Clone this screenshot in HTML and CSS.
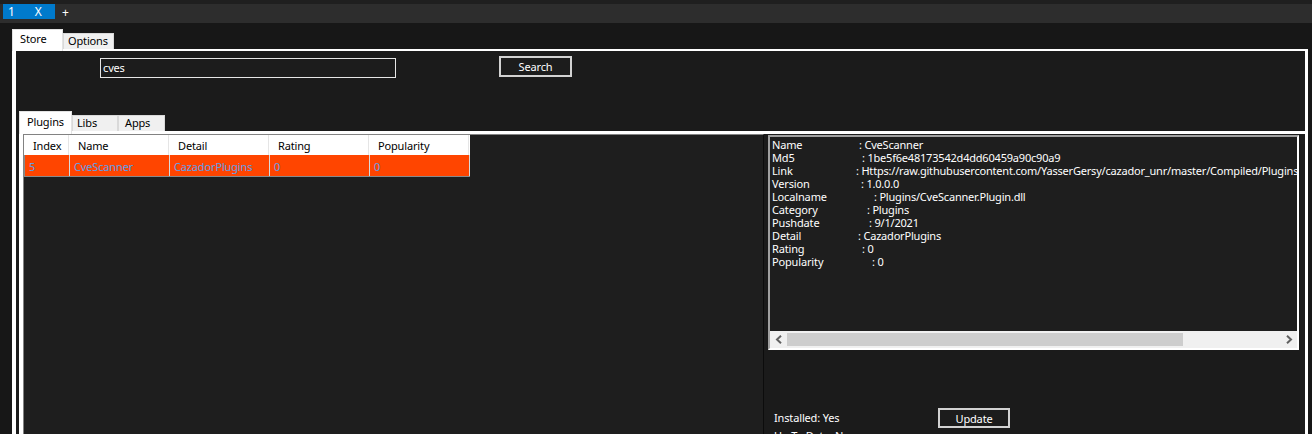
FILE: index.html
```html
<!DOCTYPE html>
<html>
<head>
<meta charset="utf-8">
<title>Store</title>
<link rel="stylesheet" href="styles.css">
</head>
<body>
<div class="topbar">
  <div class="strip">
    <div class="doc-tab"><span class="num">1</span><span class="close">X</span></div>
    <span class="add">+</span>
  </div>
</div>
<div class="main">
  <div class="tabs outer-tabs">
    <div class="tab active t-store">Store</div>
    <div class="tab t-options">Options</div>
  </div>
  <div class="page">
    <div class="search-row">
      <div class="input">cves</div>
      <div class="btn search-btn">Search</div>
    </div>
    <div class="tabs inner-tabs">
      <div class="tab active t-plugins">Plugins</div>
      <div class="tab t-libs">Libs</div>
      <div class="tab t-apps">Apps</div>
    </div>
    <div class="inner-page">
      <div class="list">
        <div class="lv-row lv-head">
          <span class="c c-index">Index</span>
          <span class="c">Name</span>
          <span class="c">Detail</span>
          <span class="c">Rating</span>
          <span class="c">Popularity</span>
        </div>
        <div class="lv-row lv-sel">
          <span class="c c-index">5</span>
          <span class="c">CveScanner</span>
          <span class="c">CazadorPlugins</span>
          <span class="c">0</span>
          <span class="c">0</span>
        </div>
      </div>
      <div class="details">
        <div class="rtb">
          <div class="info">
            <div class="row"><span class="k">Name</span>: CveScanner</div>
            <div class="row"><span class="k">Md5</span>: 1be5f6e48173542d4dd60459a90c90a9</div>
            <div class="row"><span class="k">Link</span>: Https://raw.githubusercontent.com/YasserGersy/cazador_unr/master/Compiled/Plugins/CveScanner.Plugin.dll</div>
            <div class="row"><span class="k">Version</span>: 1.0.0.0</div>
            <div class="row"><span class="k">Localname</span>: Plugins/CveScanner.Plugin.dll</div>
            <div class="row"><span class="k">Category</span>: Plugins</div>
            <div class="row"><span class="k">Pushdate</span>: 9/1/2021</div>
            <div class="row"><span class="k">Detail</span>: CazadorPlugins</div>
            <div class="row"><span class="k">Rating</span>: 0</div>
            <div class="row"><span class="k">Popularity</span>: 0</div>
          </div>
          <div class="hscroll">
            <div class="arrow">
              <svg width="8" height="9" viewBox="0 0 8 9"><path d="M6 0.8 L2 4.5 L6 8.2" fill="none" stroke="#606060" stroke-width="2"/></svg>
            </div>
            <div class="track"><div class="thumb"></div></div>
            <div class="arrow">
              <svg width="8" height="9" viewBox="0 0 8 9"><path d="M2 0.8 L6 4.5 L2 8.2" fill="none" stroke="#606060" stroke-width="2"/></svg>
            </div>
          </div>
        </div>
        <div class="status">
          <span class="installed">Installed: Yes</span>
          <div class="btn update-btn">Update</div>
        </div>
        <div class="status2">Up To Date: No</div>
      </div>
    </div>
  </div>
</div>
</body>
</html>
```
FILE: styles.css
```css
* { box-sizing: border-box; }
html, body { margin: 0; padding: 0; }
body {
  width: 1312px;
  height: 434px;
  overflow: hidden;
  background: #171717;
  font-family: "Noto Sans", "Open Sans", sans-serif;
  font-size: 11px;
  letter-spacing: -0.15px;
  color: #fff;
}

.topbar { padding-top: 4px; background: #1f1f1f; }
.strip {
  height: 19px;
  background: #2d2d2d;
  display: flex;
  align-items: flex-start;
  padding-left: 3px;
}
.doc-tab {
  width: 52px;
  height: 15px;
  background: #007acc;
  display: flex;
  align-items: center;
  font-size: 12px;
  line-height: 15px;
}
.doc-tab .num { margin-left: 5px; }
.doc-tab .close { margin-left: 20px; }
.add { margin-left: 7px; font-size: 12px; line-height: 17px; }

.main { padding: 6px 0 0 12px; }

.tabs { display: flex; align-items: flex-end; height: 20px; }
.tab {
  color: #000;
  background: #f0f0f0;
  border: 1px solid #d9d9d9;
  border-bottom: none;
  height: 16px;
  line-height: 14px;
}
.tab.active {
  background: #fff;
  border-color: #e3e3e3;
  position: relative;
  z-index: 1;
}
.outer-tabs .tab.active { height: 22px; margin-bottom: -2px; line-height: 17px; }
.inner-tabs .tab.active { height: 23px; margin-bottom: -3px; line-height: 19px; }
.t-store { width: 51px; padding-left: 7px; }
.t-options { width: 51px; padding-left: 4px; }
.t-plugins { width: 53px; padding-left: 7px; }
.t-libs { width: 46px; padding-left: 4px; }
.t-apps { width: 47px; padding-left: 6px; }

.page {
  width: 1296px;
  height: 385px;
  background: #1b1b1b;
  border-top: 2px solid #fff;
  border-left: 4px solid #fff;
  border-right: 3px solid #fff;
  overflow: hidden;
}

.search-row { display: flex; align-items: flex-start; height: 60px; }
.input {
  margin: 7px 0 0 84px;
  width: 296px;
  height: 20px;
  border: 1px solid #e6e6e6;
  background: #1c1c1c;
  padding-left: 2px;
  line-height: 17px;
}
.btn {
  height: 21px;
  border: 2px solid #d2d2d2;
  background: #1c1c1c;
  display: flex;
  align-items: center;
  justify-content: center;
  line-height: 15px;
}
.search-btn { margin: 5px 0 0 103px; width: 73px; }

.inner-tabs { margin-left: 3px; }
.inner-page {
  margin-left: 3px;
  width: 1286px;
  height: 303px;
  border-top: 3px solid #fff;
  border-left: 4px solid #fff;
  display: flex;
  overflow: hidden;
}

.list {
  width: 741px;
  background: #1e1e1e;
  border-left: 1px solid #828282;
  border-top: 1px solid #828282;
  border-right: 1px solid #0c0c0c;
}
.lv-row { display: flex; width: 446px; }
.lv-row .c { width: 100px; border-right: 1px solid #e5e5e5; white-space: nowrap; }
.lv-row .c-index { width: 45px; }
.lv-head { height: 20px; background: #fff; color: #000; line-height: 21px; }
.lv-head .c { padding-left: 9px; }
.lv-sel {
  height: 22px;
  background: #ff4500;
  color: #5f9ee6;
  line-height: 23px;
  border-bottom: 1px solid #8a8a8a;
  border-left: 1px solid #8a8a8a;
}
.lv-sel .c { padding-left: 4px; border-right-color: #d8d8d8; }
.lv-sel .c-index { width: 45px; }

.details { flex: 1; padding: 1px 0 0 4px; }
.rtb {
  width: 531px;
  height: 215px;
  border: 2px solid;
  border-color: #a0a0a0 #fff #fff #a0a0a0;
  background: #1e1e1e;
  display: flex;
  flex-direction: column;
}
.info {
  flex: 1;
  padding: 1px 0 0 2px;
  line-height: 13px;
  white-space: nowrap;
  overflow: hidden;
  letter-spacing: -0.2px;
}
.row .k { display: inline-block; letter-spacing: -0.15px; }
.row:nth-child(1) .k { width: 87px; }
.row:nth-child(2) .k { width: 90px; }
.row:nth-child(3) .k { width: 84px; }
.row:nth-child(4) .k { width: 89px; }
.row:nth-child(5) .k { width: 102px; }
.row:nth-child(6) .k { width: 95px; }
.row:nth-child(7) .k { width: 97px; }
.row:nth-child(8) .k { width: 86px; }
.row:nth-child(9) .k { width: 90px; }
.row:nth-child(10) .k { width: 100px; }

.hscroll { height: 17px; background: #f0f0f0; display: flex; align-items: center; }
.arrow { width: 17px; height: 17px; display: flex; align-items: center; justify-content: center; }
.track { flex: 1; height: 13px; }
.thumb { width: 396px; height: 13px; background: #cdcdcd; }

.status { display: flex; align-items: center; height: 20px; margin-top: 58px; }
.installed { width: 170px; padding-left: 6px; line-height: 14px; }
.update-btn { width: 72px; height: 20px; }
.status2 { padding-left: 6px; line-height: 13px; margin-top: 1px; }
```
